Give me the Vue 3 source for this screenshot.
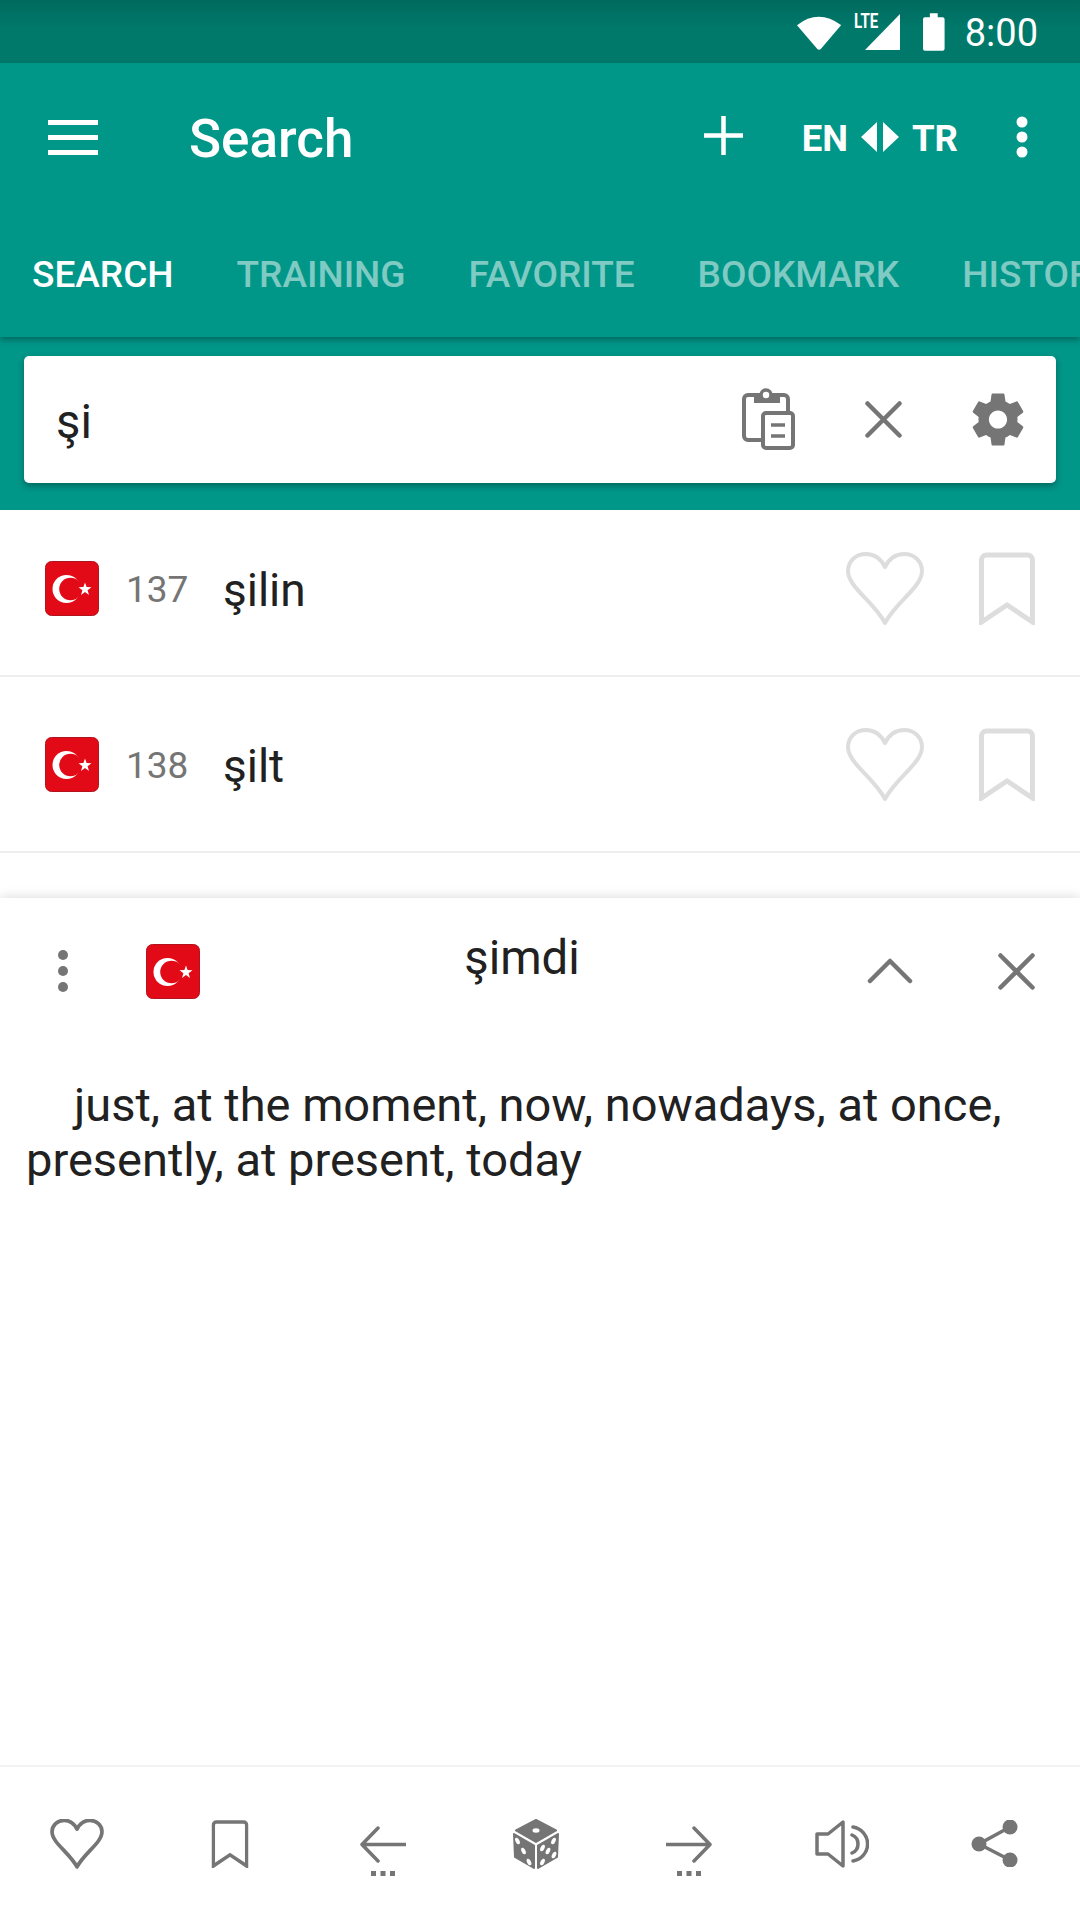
<script setup>
const tabs = ['SEARCH', 'TRAINING', 'FAVORITE', 'BOOKMARK', 'HISTORY']
const rows = [
  { id: 137, word: 'şilin' },
  { id: 138, word: 'şilt' },
]
</script>

<template>
  <div class="screen">
    <svg class="defs" aria-hidden="true">
      <symbol id="flag-tr" viewBox="0 0 54 55">
        <rect x="0.5" y="0.5" width="53" height="54" rx="6" fill="#e30a17" stroke="#b3131c" />
        <circle cx="21.5" cy="28" r="14" fill="#fff" />
        <circle cx="25.5" cy="28" r="11.3" fill="#e30a17" />
        <path fill="#fff" d="M40 21.5l1.6 4.6 4.9.1-3.9 3 1.4 4.7-4-2.8-4 2.8 1.4-4.7-3.9-3 4.9-.1z" />
      </symbol>
      <symbol id="heart" viewBox="0 0 80 74">
        <path fill="none" stroke="currentColor" stroke-linejoin="round" d="M40 71C29 50 3 35 3 19 3 9 11 2 21 2c9 0 15 5 19 13C44 7 50 2 59 2c10 0 18 7 18 17 0 16-26 31-37 52z" />
      </symbol>
      <symbol id="bookmark" viewBox="0 0 56 73">
        <path fill="none" stroke="currentColor" d="M2.5 8a5 5 0 0 1 5-5h41a5 5 0 0 1 5 5v62L28 53 2.5 70z" />
      </symbol>
      <symbol id="close" viewBox="0 0 37 37">
        <path fill="none" stroke="currentColor" stroke-width="4.5" stroke-linecap="round" d="M2.5 2.5l32 32M34.5 2.5l-32 32" />
      </symbol>
    </svg>

    <div class="status">
      <svg class="wifi" width="45" height="36" viewBox="0 0 45 36"><path fill="#fff" d="M0 11Q22-6 45 11L24.5 35Q22.5 37 20.5 35z" /></svg>
      <div class="signal">
        <span class="lte">LTE</span>
        <svg width="35" height="36" viewBox="0 0 35 36"><path fill="#fff" d="M35 0v36H0z" /></svg>
      </div>
      <svg class="battery" width="22" height="38" viewBox="0 0 22 38"><path fill="#fff" d="M7 0h8v4h5a2 2 0 0 1 2 2v30a2 2 0 0 1-2 2H2a2 2 0 0 1-2-2V6a2 2 0 0 1 2-2h5z" /></svg>
      <span class="clock">8:00</span>
    </div>

    <header class="appbar">
      <div class="toolbar">
        <svg class="menu" width="50" height="35" viewBox="0 0 50 35"><path fill="#fff" d="M0 0h50v5H0zM0 15h50v5H0zM0 30h50v5H0z" /></svg>
        <h1 class="title">Search</h1>
        <svg class="plus" width="39" height="39" viewBox="0 0 39 39"><path fill="#fff" d="M17.25 0h4.5v17.25H39v4.5H21.75V39h-4.5V21.75H0v-4.5h17.25z" /></svg>
        <span class="lang">EN</span>
        <svg class="swap" width="38" height="30" viewBox="0 0 38 30"><path fill="#fff" d="M16 0v30L0 15zM22 0l16 15-16 15z" /></svg>
        <span class="lang">TR</span>
        <svg class="more" width="12" height="42" viewBox="0 0 12 42"><circle cx="6" cy="6" r="5.5" fill="#fff" /><circle cx="6" cy="21" r="5.5" fill="#fff" /><circle cx="6" cy="36" r="5.5" fill="#fff" /></svg>
      </div>
      <nav class="tabs">
        <span v-for="(tab, i) in tabs" :key="tab" class="tab" :class="{ active: i === 0 }">{{ tab }}</span>
      </nav>
    </header>

    <div class="searchbar">
      <div class="searchbox">
        <span class="query">şi</span>
        <svg class="clip" width="53" height="62" viewBox="0 0 53 62">
          <path fill="none" stroke="#757575" stroke-width="4" d="M14 7H6a4 4 0 0 0-4 4v37a4 4 0 0 0 4 4h14M36 7h6a4 4 0 0 1 4 4v13" />
          <path fill="#757575" d="M12 5h26v10H12z" />
          <circle cx="24" cy="7" r="5" fill="#fff" stroke="#757575" stroke-width="3.5" />
          <rect x="21" y="25" width="30" height="35" rx="3" fill="#fff" stroke="#757575" stroke-width="4" />
          <path fill="none" stroke="#757575" stroke-width="3.5" d="M29 37h14M29 48h14" />
        </svg>
        <svg class="x-icon search-x" width="37" height="37"><use href="#close" /></svg>
        <svg class="gear" width="52" height="53" viewBox="2 2 20 20"><path fill="#757575" d="M19.43 12.98c.04-.32.07-.64.07-.98s-.03-.66-.07-.98l2.11-1.65c.19-.15.24-.42.12-.64l-2-3.46c-.12-.22-.39-.3-.61-.22l-2.49 1c-.52-.4-1.08-.73-1.69-.98l-.38-2.65C14.46 2.18 14.25 2 14 2h-4c-.25 0-.46.18-.49.42l-.38 2.65c-.61.25-1.17.59-1.69.98l-2.49-1c-.23-.09-.49 0-.61.22l-2 3.46c-.13.22-.07.49.12.64l2.11 1.65c-.04.32-.07.65-.07.98s.03.66.07.98l-2.11 1.65c-.19.15-.24.42-.12.64l2 3.46c.12.22.39.3.61.22l2.49-1c.52.4 1.08.73 1.69.98l.38 2.65c.03.24.24.42.49.42h4c.25 0 .46-.18.49-.42l.38-2.65c.61-.25 1.17-.59 1.69-.98l2.49 1c.23.09.49 0 .61-.22l2-3.46c.12-.22.07-.49-.12-.64l-2.11-1.65zM12 15.5c-1.93 0-3.5-1.57-3.5-3.5s1.57-3.5 3.5-3.5 3.5 1.57 3.5 3.5-1.57 3.5-3.5 3.5z" /></svg>
      </div>
    </div>

    <div class="list">
      <div v-for="row in rows" :key="row.id" class="row">
        <svg class="flag" width="54" height="55"><use href="#flag-tr" /></svg>
        <span class="num">{{ row.id }}</span>
        <span class="word">{{ row.word }}</span>
        <svg class="row-heart" width="80" height="74"><use href="#heart" /></svg>
        <svg class="row-mark" width="56" height="73"><use href="#bookmark" /></svg>
      </div>
    </div>

    <section class="panel">
      <div class="panel-head">
        <svg class="panel-more" width="12" height="44" viewBox="0 0 12 44"><circle cx="6" cy="6" r="5" fill="#757575" /><circle cx="6" cy="22" r="5" fill="#757575" /><circle cx="6" cy="38" r="5" fill="#757575" /></svg>
        <svg class="flag panel-flag" width="54" height="55"><use href="#flag-tr" /></svg>
        <span class="panel-word">şimdi</span>
        <svg class="chevron" width="46" height="26" viewBox="0 0 46 26"><path fill="none" stroke="#757575" stroke-width="4.5" stroke-linecap="round" stroke-linejoin="round" d="M3 23L23 3l20 20" /></svg>
        <svg class="x-icon panel-x" width="37" height="37"><use href="#close" /></svg>
      </div>
      <p class="meaning">just, at the moment, now, nowadays, at once, presently, at present, today</p>
    </section>

    <footer class="actions">
      <div class="action"><svg class="action-stroke" width="54" height="50" viewBox="0 0 80 74"><use href="#heart" width="80" height="74" /></svg></div>
      <div class="action"><svg class="action-stroke" width="38" height="48" viewBox="0 0 56 73"><use href="#bookmark" width="56" height="73" /></svg></div>
      <div class="action">
        <svg width="46" height="66" viewBox="0 0 46 66">
          <path fill="none" stroke="#757575" stroke-width="3.5" stroke-linecap="round" stroke-linejoin="round" d="M46 33.5H2M18 17L2 33.5 18 50" />
          <path fill="#757575" d="M11 60h5v5h-5zM20.5 60h5v5h-5zM30 60h5v5h-5z" />
        </svg>
      </div>
      <div class="action">
        <svg width="48" height="50" viewBox="0 0 48 50">
          <path fill="#757575" stroke="#757575" stroke-width="2" stroke-linejoin="round" d="M24 1l20 10.5L24 23 4 11.5zM2 15l20 11.5V49L3 38zM46 15L26 26.5V49l19-11z" />
          <ellipse cx="24" cy="11.5" rx="3.5" ry="2.2" fill="#fff" />
          <g fill="#fff">
            <ellipse cx="5.5" cy="22" rx="2" ry="3.5" transform="rotate(-25 5.5 22)" />
            <ellipse cx="11.5" cy="32" rx="2" ry="3.5" transform="rotate(-25 11.5 32)" />
            <ellipse cx="17" cy="43" rx="2" ry="3.5" transform="rotate(-25 17 43)" />
            <ellipse cx="41.5" cy="22" rx="2" ry="3.5" transform="rotate(25 41.5 22)" />
            <ellipse cx="36" cy="32" rx="2" ry="3.5" transform="rotate(25 36 32)" />
            <ellipse cx="42" cy="36" rx="2" ry="3.5" transform="rotate(25 42 36)" />
            <ellipse cx="30.5" cy="29" rx="2" ry="3.5" transform="rotate(25 30.5 29)" />
            <ellipse cx="30.5" cy="43" rx="2" ry="3.5" transform="rotate(25 30.5 43)" />
          </g>
        </svg>
      </div>
      <div class="action">
        <svg width="46" height="66" viewBox="0 0 46 66">
          <path fill="none" stroke="#757575" stroke-width="3.5" stroke-linecap="round" stroke-linejoin="round" d="M0 33.5h44M28 17l16 16.5L28 50" />
          <path fill="#757575" d="M11 60h5v5h-5zM20.5 60h5v5h-5zM30 60h5v5h-5z" />
        </svg>
      </div>
      <div class="action">
        <svg width="54" height="48" viewBox="0 0 54 48">
          <path fill="none" stroke="#757575" stroke-width="3.5" stroke-linecap="round" stroke-linejoin="round" d="M2 14h11L28 2v44L13 34H2z" />
          <path fill="none" stroke="#757575" stroke-width="3.5" stroke-linecap="round" d="M37 15a9.75 9.75 0 0 1 0 18M38 7a17.2 17.2 0 0 1 0 34" />
        </svg>
      </div>
      <div class="action">
        <svg width="47" height="47" viewBox="0 0 47 47">
          <path fill="none" stroke="#757575" stroke-width="3.5" d="M39 7L8 24l31 16" />
          <circle cx="39" cy="7" r="7.5" fill="#757575" /><circle cx="8" cy="24" r="7.5" fill="#757575" /><circle cx="39" cy="40" r="7.5" fill="#757575" />
        </svg>
      </div>
    </footer>
  </div>
</template>

<style scoped>
.screen {
  width: 1080px;
  height: 1920px;
  display: flex;
  flex-direction: column;
  overflow: hidden;
  background: #fff;
  font-family: Roboto, "Liberation Sans", sans-serif;
  color: #212121;
}
.defs { display: none; }

.status {
  height: 63px;
  flex: none;
  display: flex;
  align-items: center;
  padding: 0 42px 0 797px;
  box-sizing: border-box;
  background: linear-gradient(#006a5e, #00796b 30px);
  color: #fff;
}
.wifi { margin-top: 1px; }
.signal {
  position: relative;
  margin-left: 24px;
  height: 36px;
  margin-top: 1px;
}
.signal svg { display: block; }
.lte {
  position: absolute;
  left: -11px;
  top: -3px;
  font-size: 21px;
  font-weight: 700;
  line-height: 20px;
  transform: scaleX(.72);
  transform-origin: left center;
}
.battery { margin-left: 23px; }
.clock {
  margin-left: 20px;
  margin-top: 4px;
  font-size: 38px;
  line-height: 63px;
}

.appbar {
  flex: none;
  background: #009688;
  color: #fff;
  position: relative;
  z-index: 2;
  box-shadow: 0 3px 6px rgba(0, 0, 0, .3);
}
.toolbar {
  height: 148px;
  display: flex;
  align-items: center;
  padding-left: 48px;
}
.title {
  margin: 3px 0 0 91px;
  flex: 1;
  font-size: 53px;
  font-weight: 500;
}
.plus { flex: none; margin: -4px 2px 0 0; }
.lang {
  font-size: 36.5px;
  font-weight: 700;
  margin-top: 2px;
}
.plus + .lang { margin-left: 57px; }
.swap { margin: 0 13px; }
.more { margin: 0 52px 0 58px; }

.tabs {
  height: 126px;
  display: flex;
  align-items: center;
  padding-left: 32px;
  gap: 63px;
  overflow: hidden;
  white-space: nowrap;
}
.tab {
  font-size: 37px;
  font-weight: 500;
  color: rgba(255, 255, 255, .5);
}
.tab.active { color: #fff; }

.searchbar {
  flex: none;
  height: 173px;
  padding: 19px 24px 0;
  box-sizing: border-box;
  background: #009688;
  position: relative;
  z-index: 1;
}
.searchbox {
  height: 127px;
  display: flex;
  align-items: center;
  background: #fff;
  border-radius: 5px;
  box-shadow: 0 3px 6px rgba(0, 0, 0, .3);
}
.query {
  flex: 1;
  margin: 4px 0 0 32px;
  font-size: 47.25px;
}
.clip { margin-top: -2px; }
.x-icon { color: #757575; }
.search-x { margin-left: 70px; }
.gear { margin: 0 32px 0 70px; }

.list {
  flex: none;
  margin-top: -9px; /* first row is scrolled under the search bar */
}
.row {
  height: 176px;
  box-sizing: border-box;
  display: flex;
  align-items: center;
  border-bottom: 2px solid #eee;
}
.flag { flex: none; }
.row .flag { margin-left: 45px; }
.num {
  margin: 2px 0 0 27px;
  width: 97px;
  font-size: 37px;
  color: #757575;
}
.word {
  flex: 1;
  margin-top: 3px;
  font-size: 46px;
}
.row-heart {
  margin-top: 2px;
  color: #ddd;
  stroke-width: 4px;
}
.row-mark {
  margin: 0 45px 0 54px;
  color: #ddd;
  stroke-width: 5px;
}

.panel {
  flex: 1;
  margin-top: 45px;
  background: #fff;
  box-shadow: 0 -2px 10px rgba(0, 0, 0, .12);
  position: relative;
}
.panel-head {
  height: 146px;
  display: flex;
  align-items: center;
  padding-left: 57px;
}
.panel-flag { margin-left: 77px; }
.panel-word {
  width: 644px;
  align-self: flex-start;
  margin-top: 32px;
  font-size: 47.25px;
  text-align: center;
}
.chevron { margin-left: 23px; }
.panel-x { margin-left: 85px; }
.meaning {
  margin: 33px 26px 0;
  font-size: 47px;
  line-height: 55px;
  text-indent: 48px;
}

.actions {
  flex: none;
  height: 155px;
  box-sizing: border-box;
  display: flex;
  padding-right: 9px;
  border-top: 2px solid #f2f2f2;
  background: #fff;
  position: relative;
}
.action {
  flex: 1;
  display: flex;
  align-items: center;
  justify-content: center;
}
.action-stroke {
  color: #757575;
  stroke-width: 5.5px;
}
</style>

<style>
html, body { margin: 0; background: #fff; }
</style>
